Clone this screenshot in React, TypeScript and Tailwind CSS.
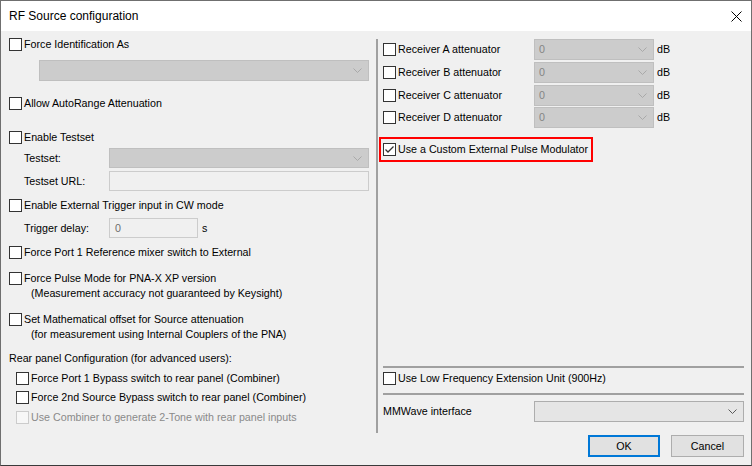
import React from "react";

function Box({ checked = false, disabled = false }: { checked?: boolean; disabled?: boolean }) {
  return (
    <span
      className={
        disabled
          ? "w-[13px] h-[13px] shrink-0 border border-[#cccccc] bg-[#f7f7f7] flex items-center justify-center"
          : "w-[13px] h-[13px] shrink-0 border border-[#333333] bg-white flex items-center justify-center"
      }
    >
      {checked && (
        <svg width="11" height="11" viewBox="0 0 11 11">
          <path d="M1.5 5.5 L4 8 L9.5 2.5" fill="none" stroke="#333333" strokeWidth="1.3" />
        </svg>
      )}
    </span>
  );
}

function Check({
  label,
  checked,
  disabled,
  className = "",
}: {
  label: string;
  checked?: boolean;
  disabled?: boolean;
  className?: string;
}) {
  return (
    <div className={`flex items-center h-[13px] ${className}`}>
      <Box checked={checked} disabled={disabled} />
      <span className={disabled ? "ml-[2px] whitespace-nowrap text-[#8a8a8a]" : "ml-[2px] whitespace-nowrap"}>{label}</span>
    </div>
  );
}

function Chevron({ dark = false }: { dark?: boolean }) {
  return (
    <svg width="9" height="5" viewBox="0 0 9 5" className="shrink-0">
      <path d="M0.5 0.5 L4.5 4.5 L8.5 0.5" fill="none" stroke={dark ? "#5a5a5a" : "#a9a9a9"} strokeWidth="1" />
    </svg>
  );
}

function Select({ value = "", className = "", enabled = false }: { value?: string; className?: string; enabled?: boolean }) {
  return (
    <div
      className={
        enabled
          ? `flex items-center justify-between border border-[#adadad] bg-[#e5e5e5] pl-[4px] pr-[6px] ${className}`
          : `flex items-center justify-between border border-[#bfbfbf] bg-[#cccccc] pl-[4px] pr-[6px] ${className}`
      }
    >
      <span className="text-[#858585]">{value}</span>
      <Chevron dark={enabled} />
    </div>
  );
}

export default function App() {
  return (
    <div
      className="w-[752px] h-[466px] border border-[#6f6f6f] border-b-[#3a3a3a] bg-[#f0f0f0] flex flex-col text-[10.7px] text-black overflow-hidden"
      style={{ fontFamily: '"Liberation Sans", Arial, sans-serif' }}
    >
      {/* Title bar */}
      <div className="h-[30px] bg-white flex items-center justify-between pl-[8px] pr-[9px] shrink-0">
        <span className="text-[12px]">RF Source configuration</span>
        <svg width="11" height="11" viewBox="0 0 11 11">
          <path d="M0.5 0.5 L10.5 10.5 M10.5 0.5 L0.5 10.5" stroke="#000" strokeWidth="1" />
        </svg>
      </div>

      <div className="flex flex-1 min-h-0">
        {/* Left column */}
        <div className="w-[375px] shrink-0 pl-[8px] flex flex-col">
          <Check label="Force Identification As" className="mt-[7px]" />
          <Select className="mt-[9px] ml-[30px] w-[330px] h-[21px]" />
          <Check label="Allow AutoRange Attenuation" className="mt-[16px]" />
          <Check label="Enable Testset" className="mt-[21px]" />
          <div className="flex items-center mt-[4px] h-[20px]">
            <span className="w-[100px] pl-[15px]">Testset:</span>
            <Select className="w-[260px] h-[20px]" />
          </div>
          <div className="flex items-center mt-[3px] h-[20px]">
            <span className="w-[100px] pl-[15px]">Testset URL:</span>
            <div className="w-[260px] h-[20px] border border-[#cccccc] bg-[#f0f0f0]" />
          </div>
          <Check label="Enable External Trigger input in CW mode" className="mt-[8px]" />
          <div className="flex items-center mt-[6px] h-[20px]">
            <span className="w-[100px] pl-[15px]">Trigger delay:</span>
            <div className="w-[89px] h-[20px] border border-[#cccccc] bg-[#f0f0f0] flex items-center pl-[5px] text-[#6d6d6d]">0</div>
            <span className="ml-[4px]">s</span>
          </div>
          <Check label="Force Port 1 Reference mixer switch to External" className="mt-[8px]" />
          <Check label="Force Pulse Mode for PNA-X XP version" className="mt-[13px]" />
          <div className="mt-[1px] h-[14px] leading-[14px] pl-[22px]">(Measurement accuracy not guaranteed by Keysight)</div>
          <Check label="Set Mathematical offset for Source attenuation" className="mt-[13px]" />
          <div className="mt-[1px] h-[14px] leading-[14px] pl-[22px]">(for measurement using Internal Couplers of the PNA)</div>
          <div className="mt-[10px] h-[14px] leading-[14px]">Rear panel Configuration (for advanced users):</div>
          <Check label="Force Port 1 Bypass switch to rear panel (Combiner)" className="mt-[7px] ml-[7px]" />
          <Check label="Force 2nd Source Bypass switch to rear panel (Combiner)" className="mt-[6px] ml-[7px]" />
          <Check label="Use Combiner to generate 2-Tone with rear panel inputs" disabled className="mt-[7px] ml-[7px]" />
        </div>

        {/* Divider */}
        <div className="w-[2px] h-[394px] mt-[8px] bg-[#a0a0a0] shrink-0" />

        {/* Right column */}
        <div className="flex-1 flex flex-col pl-[5px] pr-[7px] pb-[8px]">
          {["A", "B", "C", "D"].map((r, i) => (
            <div
              key={r}
              className={
                i === 0
                  ? "flex items-center h-[21px] mt-[8px]"
                  : i === 3
                  ? "flex items-center h-[21px] mt-[1px]"
                  : "flex items-center h-[21px] mt-[2px]"
              }
            >
              <div className="w-[151px] flex items-center">
                <Box />
                <span className="ml-[2px] whitespace-nowrap">Receiver {r} attenuator</span>
              </div>
              <Select value="0" className="w-[120px] h-[21px]" />
              <span className="ml-[3px] self-start mt-[2px]">dB</span>
            </div>
          ))}
          <div className="mt-[9px] -ml-[4px] w-[214px] h-[25px] border-2 border-[#ff0000] flex items-center pl-[2px]">
            <Box checked />
            <span className="ml-[2px] whitespace-nowrap">Use a Custom External Pulse Modulator</span>
          </div>

          <div className="mt-auto h-[2px] bg-[#a0a0a0]" />
          <Check label="Use Low Frequency Extension Unit (900Hz)" className="mt-[4px]" />
          <div className="mt-[8px] h-[2px] bg-[#a0a0a0]" />
          <div className="flex items-center mt-[6px] h-[21px]">
            <span className="w-[151px]">MMWave interface</span>
            <Select enabled className="flex-1 h-[21px]" />
          </div>
          <div className="flex justify-end mt-[13px] gap-[11px]">
            <div className="w-[72px] h-[22px] border-2 border-[#0078d7] bg-[#e1e1e1] flex items-center justify-center">OK</div>
            <div className="w-[73px] h-[22px] border border-[#adadad] bg-[#e1e1e1] flex items-center justify-center">Cancel</div>
          </div>
        </div>
      </div>
    </div>
  );
}
